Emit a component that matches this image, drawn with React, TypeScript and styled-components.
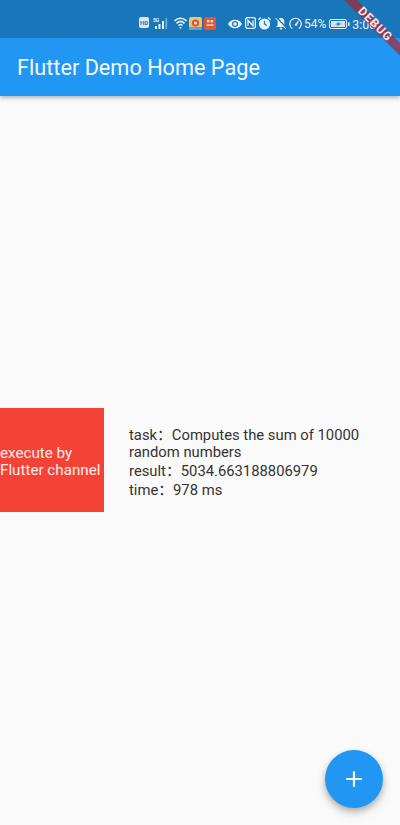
import React from 'react';
import styled, { createGlobalStyle } from 'styled-components';
import { Plus } from 'lucide-react';

const GlobalStyle = createGlobalStyle`
  html, body {
    margin: 0;
    padding: 0;
    background: #fafafa;
    font-family: Roboto, "Noto Sans CJK SC", sans-serif;
  }
`;

const Screen = styled.div`
  position: relative;
  width: 400px;
  height: 825px;
  overflow: hidden;
  display: flex;
  flex-direction: column;
  background: #fafafa;
`;

const Header = styled.header`
  position: relative;
  box-shadow: 0 2px 4px rgba(0, 0, 0, 0.28);
`;

const StatusBar = styled.div`
  height: 38px;
  box-sizing: border-box;
  padding: 17px 0 0 139px;
  background: #1976ba;
  display: flex;
  align-items: flex-start;
  color: #e8f2fa;
`;

const StatusIcon = styled.svg<{ $mr?: number; $mt?: number }>`
  flex: none;
  display: block;
  margin-right: ${(p) => p.$mr ?? 2}px;
  margin-top: ${(p) => p.$mt ?? 0}px;
`;

const StatusText = styled.span<{ $mr?: number; $size?: number }>`
  flex: none;
  font-size: ${(p) => p.$size ?? 12}px;
  line-height: 13px;
  margin-top: 1px;
  margin-right: ${(p) => p.$mr ?? 0}px;
`;

const AppBar = styled.div`
  height: 58px;
  box-sizing: border-box;
  padding-left: 17px;
  background: #2196f3;
  display: flex;
  align-items: center;
`;

const Title = styled.h1`
  margin: 0;
  font-size: 21.7px;
  font-weight: 400;
  color: #f2f9fe;
  white-space: nowrap;
`;

const Body = styled.main`
  flex: 1;
  display: flex;
  align-items: center;
  padding-bottom: 1px;
`;

const TaskRow = styled.div`
  display: flex;
  align-items: center;
  gap: 25px;
`;

const RedBox = styled.div`
  flex: none;
  width: 104px;
  height: 104px;
  box-sizing: border-box;
  padding-top: 3px;
  background: #f44336;
  color: #fbeeee;
  font-size: 15.2px;
  line-height: 17px;
  display: flex;
  flex-direction: column;
  justify-content: center;
  white-space: nowrap;
`;

const Info = styled.div`
  width: 240px;
  padding-top: 8px;
  font-size: 14.8px;
  line-height: 17px;
  color: #333;
`;

const BoxLine = styled.div``;

const InfoLine = styled.div`
  margin-bottom: 2px;
`;

const Fab = styled.button`
  position: absolute;
  left: 325px;
  top: 750px;
  width: 58px;
  height: 58px;
  padding: 0;
  border: none;
  border-radius: 50%;
  background: #2196f3;
  color: #f5fbff;
  display: flex;
  align-items: center;
  justify-content: center;
  box-shadow: 0 3px 6px rgba(0, 0, 0, 0.25), 0 6px 12px rgba(0, 0, 0, 0.1);
`;

const DebugBanner = styled.div`
  position: absolute;
  left: 315px;
  top: 20px;
  width: 120px;
  height: 9px;
  transform: rotate(45deg);
  background: rgba(183, 28, 28, 0.63);
  color: #f4e6ea;
  font-size: 12px;
  font-weight: 700;
  line-height: 9px;
  letter-spacing: 1px;
  text-align: center;
`;

function StatusIcons() {
  return (
    <>
      <StatusIcon $mr={4} width="10" height="11" viewBox="0 0 10 11">
        <rect width="10" height="11" rx="2" fill="#d9e8f4" />
        <text x="5" y="8" fontSize="6" fontWeight="700" fontFamily="Roboto" textAnchor="middle" fill="#1976ba">HD</text>
      </StatusIcon>
      <StatusIcon $mr={3} width="18" height="12" viewBox="0 0 18 12">
        <text x="0" y="5" fontSize="5" fontWeight="700" fontFamily="Roboto" fill="#e8f2fa">5G</text>
        <rect x="2" y="9" width="2" height="3" fill="#e8f2fa" />
        <rect x="5.5" y="7" width="2" height="5" fill="#e8f2fa" />
        <rect x="9" y="4" width="2" height="8" fill="#e8f2fa" />
        <rect x="12.5" y="1" width="1.6" height="11" fill="#7fb2d8" />
      </StatusIcon>
      <StatusIcon $mr={2} width="13" height="12" viewBox="0 0 13 12" fill="none" stroke="#e8f2fa" strokeWidth="1.6">
        <path d="M0.5 4 C4 0.4 9 0.4 12.5 4" />
        <path d="M2.5 6.3 C5 3.9 8 3.9 10.5 6.3" />
        <path d="M4.5 8.5 C5.6 7.4 7.4 7.4 8.5 8.5" />
        <circle cx="6.5" cy="10.7" r="1" fill="#e8f2fa" stroke="none" />
      </StatusIcon>
      <StatusIcon $mr={2} width="13" height="13" viewBox="0 0 13 13">
        <rect width="13" height="13" rx="2" fill="#f0c75e" />
        <circle cx="6.5" cy="6" r="3.6" fill="#d9503f" />
        <circle cx="6.5" cy="6" r="1.6" fill="#f6e7c8" />
        <rect y="10" width="13" height="3" fill="#58a6d6" />
      </StatusIcon>
      <StatusIcon $mr={12} width="12" height="13" viewBox="0 0 12 13">
        <rect width="12" height="13" rx="2" fill="#e2593a" />
        <rect x="3" y="3" width="2.4" height="2.4" fill="#f8d9c8" />
        <rect x="6.6" y="3" width="2.4" height="2.4" fill="#f8d9c8" />
        <rect x="2.5" y="7.4" width="7" height="1.4" fill="#f8d9c8" />
      </StatusIcon>
      <StatusIcon $mr={3} $mt={2} width="14" height="10" viewBox="0 0 14 10">
        <path d="M0 5 C3 -0.6 11 -0.6 14 5 C11 10.6 3 10.6 0 5 Z" fill="#e8f2fa" />
        <circle cx="7" cy="5" r="3" fill="#1976ba" />
        <circle cx="7" cy="5" r="1.8" fill="#e8f2fa" />
      </StatusIcon>
      <StatusIcon $mr={2} width="11" height="12" viewBox="0 0 11 12" fill="none" stroke="#e8f2fa" strokeWidth="1.3">
        <rect x="0.6" y="0.6" width="9.8" height="10.8" rx="2" />
        <path d="M3 8.8 V3.2 L8 8.8 V3.2" />
      </StatusIcon>
      <StatusIcon $mr={4} width="13" height="13" viewBox="0 0 13 13">
        <circle cx="6.5" cy="7" r="5.6" fill="#e8f2fa" />
        <path d="M6.5 3.8 V7 L8.8 8.6" fill="none" stroke="#1976ba" strokeWidth="1.2" />
        <path d="M0.4 2.8 L2.8 0.6 M12.6 2.8 L10.2 0.6" stroke="#e8f2fa" strokeWidth="1.3" />
      </StatusIcon>
      <StatusIcon $mr={2} width="12" height="13" viewBox="0 0 12 13">
        <path d="M6 1 C3.6 1 2.6 3 2.6 5 V8.4 L1 10 H11 L9.4 8.4 V5 C9.4 3 8.4 1 6 1 Z" fill="#e8f2fa" />
        <rect x="4.6" y="10.8" width="2.8" height="1.6" rx="0.8" fill="#e8f2fa" />
        <path d="M1.6 0.4 L12 11.4" stroke="#1976ba" strokeWidth="1.4" />
        <path d="M0.6 1 L11 12" stroke="#e8f2fa" strokeWidth="1" />
      </StatusIcon>
      <StatusIcon $mr={2} width="13" height="13" viewBox="0 0 13 13" fill="none" stroke="#e8f2fa" strokeWidth="1.2">
        <path d="M3.2 11.6 A5.7 5.7 0 1 1 9.8 11.6" />
        <path d="M5.8 8 L9.6 3.6 L7.4 8.8 Z" fill="#e8f2fa" strokeWidth="0.6" />
      </StatusIcon>
      <StatusText $mr={3}>54%</StatusText>
      <StatusIcon $mr={2} $mt={2} width="21" height="10" viewBox="0 0 21 10">
        <rect x="0.5" y="0.5" width="17" height="9" rx="1.6" fill="none" stroke="#e8f2fa" />
        <rect x="2" y="2" width="14" height="6" fill="#d2e4f2" />
        <path d="M11 2.6 L6 5.4 H9 L7.6 7.6 L12.6 4.6 H9.6 Z" fill="#1976ba" />
        <rect x="19" y="3" width="1.6" height="4" rx="0.6" fill="#e8f2fa" />
      </StatusIcon>
      <StatusText $size={12.5}>3:08</StatusText>
    </>
  );
}

export default function App() {
  return (
    <Screen>
      <GlobalStyle />
      <Header>
        <StatusBar>
          <StatusIcons />
        </StatusBar>
        <AppBar>
          <Title>Flutter Demo Home Page</Title>
        </AppBar>
      </Header>
      <Body>
        <TaskRow>
          <RedBox>
            <BoxLine>execute by</BoxLine>
            <BoxLine>Flutter channel</BoxLine>
          </RedBox>
          <Info>
            <InfoLine>task：Computes the sum of 10000 random numbers</InfoLine>
            <InfoLine>result：5034.663188806979</InfoLine>
            <InfoLine>time：978 ms</InfoLine>
          </Info>
        </TaskRow>
      </Body>
      <Fab aria-label="add">
        <Plus size={24} strokeWidth={2.2} />
      </Fab>
      <DebugBanner>DEBUG</DebugBanner>
    </Screen>
  );
}
